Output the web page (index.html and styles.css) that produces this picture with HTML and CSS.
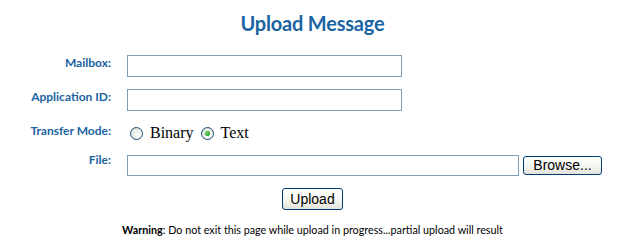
FILE: index.html
```html
<!DOCTYPE html>
<html>
<head>
<meta charset="utf-8">
<title>Upload Message</title>
<link rel="stylesheet" href="styles.css">
</head>
<body>
<div class="page">
  <h1 class="title">Upload Message</h1>
  <form class="form">
    <label class="label" for="mailbox">Mailbox:</label>
    <input class="field" id="mailbox" type="text">

    <label class="label" for="appid">Application ID:</label>
    <input class="field" id="appid" type="text">

    <span class="label">Transfer Mode:</span>
    <div class="modes">
      <label class="mode"><span class="radio"></span>Binary</label>
      <label class="mode"><span class="radio radio-on"></span>Text</label>
    </div>

    <label class="label label-file" for="file">File:</label>
    <div class="file-row">
      <input class="field field-file" id="file" type="text">
      <button class="btn btn-browse" type="button">Browse...</button>
    </div>
  </form>
  <div class="actions">
    <button class="btn btn-upload" type="button">Upload</button>
  </div>
  <p class="warning"><b>Warning</b>: Do not exit this page while upload in progress...partial upload will result</p>
</div>
</body>
</html>
```

FILE: styles.css
```css
html, body {
  margin: 0;
  padding: 0;
  background: #ffffff;
}

.page {
  width: 625px;
  font-family: "Lato", "Open Sans", sans-serif;
}

.title {
  margin: 0;
  padding-top: 10px;
  height: 44px;
  box-sizing: border-box;
  text-align: center;
  font-size: 20px;
  line-height: 26px;
  font-weight: 700;
  color: #1a64a2;
  letter-spacing: -0.2px;
}

.form {
  display: grid;
  grid-template-columns: 111px auto;
  column-gap: 16px;
  row-gap: 12px;
  margin-top: 11px;
}

.label {
  justify-self: end;
  align-self: start;
  font-size: 12px;
  line-height: 15px;
  padding-top: 0;
  font-weight: 700;
  color: #1a64a2;
}

.label-file {
  margin-top: -3px;
}

.field {
  box-sizing: border-box;
  width: 275px;
  height: 22px;
  margin: 0;
  border: 1px solid #7f9db9;
  background: #ffffff;
  padding: 0 3px;
  outline: none;
}

.modes {
  display: flex;
  align-items: center;
  height: 20px;
  margin-left: 3px;
}

.mode {
  display: flex;
  align-items: center;
  font-family: "Liberation Serif", "Times New Roman", serif;
  font-size: 16px;
  color: #000000;
  margin-right: 7px;
}

.radio {
  box-sizing: border-box;
  width: 13px;
  height: 13px;
  border-radius: 50%;
  border: 1px solid #1c5180;
  background: radial-gradient(circle at 65% 65%, #ffffff 0%, #e8e8e1 60%, #c8c8bf 100%);
  margin-right: 7px;
  display: flex;
  align-items: center;
  justify-content: center;
}

.radio-on::after {
  content: "";
  width: 5px;
  height: 5px;
  border-radius: 50%;
  background: radial-gradient(circle at 40% 40%, #6fd86f 0%, #21a121 70%);
}

.file-row {
  display: flex;
  align-items: center;
  gap: 4px;
}

.field-file {
  width: 392px;
  height: 21px;
}

.btn {
  box-sizing: border-box;
  margin: 0;
  font-family: "Liberation Sans", Arial, sans-serif;
  font-size: 14px;
  color: #000000;
  border: 1px solid #003c74;
  border-radius: 3px;
  background: linear-gradient(#ffffff 0%, #f4f4f0 60%, #e3e2d8 100%);
  padding: 0;
}

.btn-browse {
  width: 79px;
  height: 19px;
  line-height: 17px;
}

.actions {
  display: flex;
  justify-content: center;
  margin-top: 12px;
}

.btn-upload {
  width: 61px;
  height: 22px;
  line-height: 20px;
}

.warning {
  margin: 14px 0 0;
  text-align: center;
  font-size: 10.75px;
  line-height: 12px;
  color: #000000;
}

.warning b {
  font-weight: 700;
}
```
